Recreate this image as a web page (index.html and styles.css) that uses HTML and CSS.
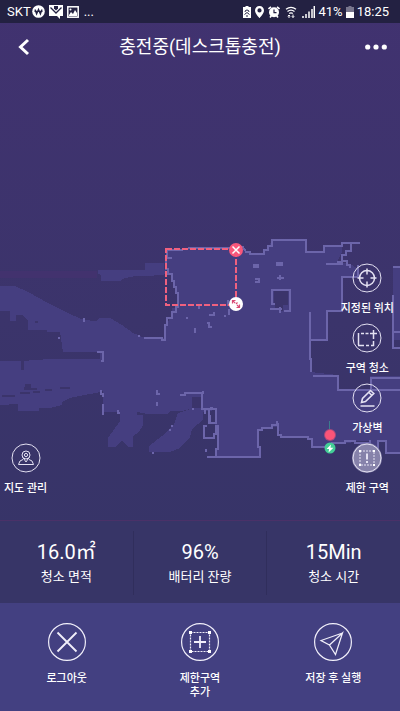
FILE: index.html
```html
<!DOCTYPE html>
<html lang="ko">
<head>
    <meta charset="UTF-8">
    <meta name="viewport" content="width=device-width, initial-scale=1.0">
    <title>로봇청소기 지도</title>
    <link rel="stylesheet" href="styles.css">
</head>
<body>
    <div class="app">
        <!-- Status bar -->
        <div class="status-bar">
            <div class="status-group status-left">
                <span>SKT</span>
                <svg width="13" height="13" viewBox="0 0 13 13"><circle cx="6.5" cy="6.5" r="6.3" fill="#fff"/><path d="M3 4.5l1.6 4.5 1.9-4.5 1.9 4.5L10 4.5M2.5 6.3h8" fill="none" stroke="#232142" stroke-width="1.3"/></svg>
                <svg class="icon-mail" width="14" height="14" viewBox="0 0 14 14"><path d="M0 0h14v11h-3v3l-3-3H0z" fill="#fff"/><path d="M1.5 2.500l5.500 5.500 5.500-5.500" fill="none" stroke="#232142" stroke-width="1.3"/><path d="M5 1h4v2.500l-2 2-2-2z" fill="#232142"/></svg>
                <svg width="12" height="12" viewBox="0 0 12 12"><rect x=".8" y=".8" width="10.400" height="10.400" fill="none" stroke="#fff" stroke-width="1.500"/><path d="M2 9l2-3 2 2 2-4 2 3v3H2z" fill="#fff"/><circle cx="3.500" cy="3.500" r="1" fill="#fff"/></svg>
                <span class="more">...</span>
            </div>
            <div class="status-group">
                <svg width="8" height="12" viewBox="0 0 8 12"><path d="M2.500 0h3v1H8v11H0V1h2.500z" fill="#fff"/><path d="M2 6a2 2 0 0 1 4 0M1.500 8.500L4 6.500l2.500 2M3 10h2" fill="none" stroke="#232142" stroke-width="1"/></svg>
                <svg class="icon-location" width="9" height="12" viewBox="0 0 9 12"><path fill-rule="evenodd" d="M4.500 0A4.400 4.400 0 0 0 0 4.400C0 7.500 4.500 12 4.500 12S9 7.500 9 4.400A4.400 4.400 0 0 0 4.500 0zm0 2.300a2 2 0 1 1 0 4.200 2 2 0 0 1 0-4.200z" fill="#fff"/></svg>
                <svg width="12" height="12" viewBox="0 0 12 12"><circle cx="6" cy="6.300" r="5" fill="#fff"/><path d="M.5 3L3 .8M11.500 3L9 .8M2 11.500l1.500-2M10 11.500L8.500 9.500" stroke="#fff" stroke-width="1.600"/><path d="M6 3.500v3.200h2.500" fill="none" stroke="#232142" stroke-width="1.200"/></svg>
                <svg class="icon-wifi" width="12" height="12" viewBox="0 0 12 12"><path d="M1 3.300q5-4 10 0M2.500 5.500q3.500-2.800 7 0M4.200 7.500q1.800-1.400 3.600 0" fill="none" stroke="#fff" stroke-width="1.300"/><path d="M4 12V9M2.800 10.300L4 9l1.200 1.300M8 8.500v3M6.800 10.200L8 11.500l1.200-1.300" fill="none" stroke="#fff"/></svg>
                <svg width="13" height="12" viewBox="0 0 13 12"><path d="M1 12v-2M4 12V8M7 12V5.500M10 12V3M12.300 12V0" stroke="#fff" stroke-width="1.500"/></svg>
                <span>41%</span>
                <svg width="8" height="12" viewBox="0 0 8 12"><path d="M2.500 0h3v1H8v6H0V1h2.500z" fill="#77758c"/><path d="M0 6h8v6H0z" fill="#fff"/></svg>
                <span>18:25</span>
            </div>
        </div>

        <header class="header">
            <button class="header-button" aria-label="뒤로">
                <svg width="12" height="18" viewBox="0 0 12 18"><path d="M10 2L2.500 9l7.500 7" fill="none" stroke="#fff" stroke-width="3"/></svg>
            </button>
            <h1>충전중(데스크톱충전)</h1>
            <button class="header-button" aria-label="더보기">
                <svg width="22" height="6" viewBox="0 0 22 6"><g fill="#fff"><circle cx="2.700" cy="3" r="2.600"/><circle cx="11" cy="3" r="2.600"/><circle cx="19.300" cy="3" r="2.600"/></g></svg>
            </button>
        </header>

        <!-- Map -->
        <main class="map">
            <svg class="map-canvas" viewBox="0 70 400 450" preserveAspectRatio="none" shape-rendering="crispEdges">
                <!-- scanned floor -->
                <g fill="#453e80">
                    <path d="M168 249L235 247H242L246 252L252 254H264L268 247L273 240H306V252H324V246H342V252L337 262L350 264L357 268V277H342V311H327V340H310V372L338 375V390H370V376H400V453H385V441H378V447H370V441H355L350 443H335L333 447H312V438L300 436H280L279 426L275 427L258 430V445L261 447V457H215L218 445V425H215V410L203 412V409L190 409L182 411H170L168 414H148L137 412V415H143V425L139 432L133 436V447H128L122 440L115 447H108V438L120 421V415L117 412H103V391L96 393L84 395L70 398L62 402V405L50 408H39V411H18V404L0 405V361H22L50 359H100V352H63L60 332H47V330H28V320L22 315H10V311H0V286H15L28 292L48 303L70 314L84 320L96 321L99 318H110L122 325L133 333L145 338H165L166 325L172 315V308H178V293L173 280L168 270L166 262Z"/>
                    <path d="M178 413L174 425L162 436L149 446V452H170L180 448L190 437L192 429L203 420V409H190Z"/>
                    <path d="M98 270H166V274L150 276H136L125 278L120 281H101V275L98 274ZM145 263H164V275H145Z"/>
                    <path d="M393 267H400V340H393ZM10 314H16V321H10Z"/>
                </g>
                <g fill="#3b346b">
                    <path d="M21 361H24V370H21ZM25 384H31V388H37V390H24ZM2 395H15V397H2ZM20 392H30V394H20ZM33 391H40V393H33ZM45 389H52V391H45ZM60 387H70V389H60ZM192 397H202V408H192ZM35 321H38V323H35Z"/>
                    <path d="M274 290H288V305H283V311H279V308H275V304H274Z"/>
                </g>
                <path d="M0 271H97V278H0Z" fill="#42326e"/>
                <!-- walls -->
                <g fill="none" stroke="#6c65aa" stroke-width="2">
                    <path d="M168 250H183M188 248H236M236 247H243L246 252H250V254H264V250H268V246H272V240H306V252H324V246H342V243H360M351 244V251H346V255H342V262H337M326 264H342V261H347V265H350V268M358 265V277H342V311H327V340H310V312"/>
                    <path d="M167 250V258H172M166 259V269H168V274H172V281H174V287H176V293H178V307H176V312H172V318H167V325H165V340H162V338H144"/>
                    <path d="M310 330V359H311V372M313 376H338V390H400M371 390V378H400M393 267H400M393 295V348H400M394 332H400"/>
                    <path d="M272 305V290H290V311H284M270 309H282M280 307V313M272 304H275"/>
                    <path d="M180 395H185V393H203V391M202 393V409H216V423H209V410M210 408H213M205 409V414M210 415V423M207 426H204V438H214V434H216V425M218 425V449H216V457M207 457H260V447H258V430H262V428H272V425H277V421M278 423V435H281V437H308V439H312V447H332V443H345V441H355V443H370V441H371M378 453V441H386V453H400M206 449V452"/>
                    <path d="M97 352H103V361H101M101 390V394H103V397M103 404V415M117 411H118V413H120M157 390V394H160M157 402V406M192 409H194M171 426H173M169 430H171M152 453H154M84 318V322M59 337V339M138 336H140"/>
                    <path d="M253 265H258V267H253M255 279H259V282H255M276 263H282V265H276M280 275V280M277 278H284M199 305V309M209 315H214V312M211 316V314M228 300V306M229 309V315M187 317V319M207 323H209V327H212M195 328V333M225 315V317"/>
                </g>
                <path d="M329 421V433" stroke="#3c7c8d" stroke-width="1"/>
                <!-- restricted zone -->
                <path d="M166 249H236V305H166Z" fill="none" stroke="#f0617f" stroke-width="2" stroke-dasharray="6 2"/>
            </svg>
            <span class="robot"></span>
            <span class="dock">
                <svg width="7" height="8" viewBox="0 0 7 8"><path d="M4.500 0L0 4.500h2.600L2 8l5-4.800H4z" fill="#fff"/></svg>
            </span>
            <button class="zone-handle zone-delete" aria-label="구역 삭제">
                <svg width="14" height="14" viewBox="0 0 14 14"><path d="M3.500 3.500l7 7M10.500 3.500l-7 7" stroke="#fff" stroke-width="1.500"/></svg>
            </button>
            <button class="zone-handle zone-resize" aria-label="구역 크기 조절">
                <svg width="14" height="14" viewBox="0 0 14 14"><path d="M3.500 3.500l2.700 2.700M8 8l2.500 2.500M3.500 6.500v-3h3M7.500 10.500h3v-3M8.500 5.500L7 7" fill="none" stroke="#d94b75" stroke-width="1.200"/></svg>
            </button>

            <button class="tool">
                <svg class="tool-icon" viewBox="0 0 30 30"><circle cx="15" cy="15" r="14"/><circle cx="15" cy="12" r="4"/><circle cx="15" cy="12" r="1.600"/><path d="M12 14.500L15 19l3-4.500M12 16.500L9 18l-1.500 3.500h15L21 18l-3-1.500"/></svg>
                지도 관리
            </button>
            <nav class="tools">
                <button class="tool">
                    <svg class="tool-icon" viewBox="0 0 30 30"><circle cx="15" cy="15" r="14"/><circle cx="15" cy="15" r="7.500" stroke-width="1.500"/><path d="M15 5.500v6M15 18.500v6M5.500 15h6M18.500 15h6" stroke-width="1.500"/></svg>
                    지정된 위치
                </button>
                <button class="tool">
                    <svg class="tool-icon" viewBox="0 0 30 30"><circle cx="15" cy="15" r="14"/><path d="M6.500 22V10M9 10.500h3M13.500 10.500h3M21.500 14v2M21.500 18v4.500H19M17 22.500h-3M12 22.500H6" stroke-width="1.500"/><path d="M18 10.500h7M21.500 7v7" stroke-width="1.500"/></svg>
                    구역 청소
                </button>
                <button class="tool">
                    <svg class="tool-icon" viewBox="0 0 30 30"><circle cx="15" cy="15" r="14"/><path d="M9.500 19.500l1-4 8-8 3.300 3-8.300 8zM17 9.500l3 3M8.500 23h14" stroke-width="1.600"/></svg>
                    가상벽
                </button>
                <button class="tool tool-active">
                    <svg class="tool-icon" viewBox="0 0 30 30"><circle cx="15" cy="15" r="14"/><path d="M8 8h14v14H8z" stroke-dasharray="2 1"/><path d="M15 10.500v6M15 18v2" stroke-width="2"/><path d="M7 7h2v2H7zM21 7h2v2h-2zM7 21h2v2H7zM21 21h2v2h-2z" fill="#fff" stroke="none"/></svg>
                    제한 구역
                </button>
            </nav>
        </main>

        <!-- Cleaning stats -->
        <section class="stats">
            <div class="stat"><strong>16.0㎡</strong><span>청소 면적</span></div>
            <div class="stat"><strong>96%</strong><span>배터리 잔량</span></div>
            <div class="stat"><strong>15Min</strong><span>청소 시간</span></div>
        </section>

        <footer class="actions">
            <button class="action">
                <svg class="action-icon" viewBox="0 0 38 38"><circle cx="19" cy="19" r="18.400"/><path d="M9.500 9.500l19 19M28.500 9.500l-19 19" stroke-width="1.800"/></svg>
                로그아웃
            </button>
            <button class="action">
                <svg class="action-icon" viewBox="0 0 38 38"><circle cx="19" cy="19" r="18.400"/><path d="M9.500 9.500h19v19h-19z" stroke-dasharray="2 1"/><path d="M19 13v12M13 19h12" stroke-width="1.800"/><path d="M8 8h3v3H8zM27 8h3v3h-3zM8 27h3v3H8zM27 27h3v3h-3z" fill="#fff" stroke="none"/></svg>
                제한구역<br>추가
            </button>
            <button class="action">
                <svg class="action-icon" viewBox="0 0 38 38"><circle cx="19" cy="19" r="18.400"/><path d="M28.500 10L7 17.500l8.500 4.500zM28.500 10L15.500 22l6 9.500z"/></svg>
                저장 후 실행
            </button>
        </footer>
    </div>
</body>
</html>
```
FILE: styles.css
```css
* {
    box-sizing: border-box;
}
body {
    margin: 0;
    color: #fff;
    font-family: Roboto, "Noto Sans CJK KR", sans-serif;
}
button {
    padding: 0;
    border: none;
    background: none;
    color: inherit;
    font-family: inherit;
    cursor: pointer;
}
svg {
    display: block;
}
.app {
    display: flex;
    flex-direction: column;
    min-height: 100vh;
    background: linear-gradient(#413270, #3b346b 45%, #373468 75%);
}

/* status bar */
.status-bar {
    display: flex;
    justify-content: space-between;
    align-items: center;
    height: 23px;
    padding: 0 11px 0 7px;
    background: #232142;
    font-size: 13px;
    line-height: 16px;
}
.status-group {
    display: flex;
    align-items: center;
    gap: 3px;
}
.status-left {
    gap: 1px;
}
.icon-mail {
    margin: 0 3px;
}
.more {
    margin-left: 4px;
}
.icon-wifi {
    margin: 0 2px;
}
.icon-location {
    margin: 0 1px;
}

/* header */
.header {
    display: flex;
    justify-content: space-between;
    align-items: center;
    height: 47px;
    padding: 0 13px;
}
.header h1 {
    margin: 0;
    font-size: 18px;
    font-weight: 400;
    line-height: 24px;
}
.header-button {
    display: flex;
    width: 22px;
    height: 32px;
    justify-content: center;
    align-items: center;
}

/* map */
.map {
    position: relative;
    display: flex;
    flex: 1;
    justify-content: space-between;
    align-items: flex-end;
    min-height: 400px;
    padding: 0 6px 23px 4px;
}
.map-canvas {
    position: absolute;
    top: 0;
    left: 0;
    width: 100%;
    height: 100%;
}
.robot,
.dock,
.zone-handle {
    position: absolute;
    display: flex;
    justify-content: center;
    align-items: center;
    border-radius: 50%;
    transform: translate(-50%, -50%);
}
.robot {
    left: 82.5%;
    top: 81%;
    width: 10px;
    height: 10px;
    background: #fb5478;
    box-shadow: 0 0 0 1px #a94a7c;
}
.dock {
    left: 82.5%;
    top: 84%;
    width: 11px;
    height: 11px;
    background: #43cf97;
}
.zone-handle {
    left: 59%;
    width: 14px;
    height: 14px;
}
.zone-delete {
    top: 40%;
    background: #f9577b;
}
.zone-resize {
    top: 52%;
    background: #fff;
}
.tools {
    display: flex;
    flex-direction: column;
    align-items: center;
    gap: 6px;
}
.tool {
    position: relative;
    display: flex;
    flex-direction: column;
    align-items: center;
    gap: 8px;
    font-size: 11px;
    font-weight: 500;
    line-height: 16px;
    white-space: nowrap;
}
.tool-icon {
    width: 30px;
    height: 30px;
    border-radius: 50%;
    fill: none;
    stroke: #e4e1f2;
}
.tool-active .tool-icon {
    background: #8682aa;
}

/* stats */
.stats {
    display: flex;
    align-items: center;
    height: 83px;
    padding-top: 2px;
    border-top: 1px solid #4a3168;
    background: #373567;
}
.stat {
    display: flex;
    flex: 1;
    flex-direction: column;
    justify-content: center;
    align-items: center;
    height: 64px;
    gap: 4px;
    font-size: 13px;
    line-height: 18px;
}
.stat + .stat {
    border-left: 1px solid #302e5c;
}
.stat strong {
    font-size: 20px;
    font-weight: 400;
    line-height: 24px;
}

/* bottom actions */
.actions {
    display: flex;
    height: 108px;
    padding-top: 20px;
    background: #434081;
}
.action {
    display: flex;
    flex: 1;
    flex-direction: column;
    align-items: center;
    gap: 11px;
    font-size: 11px;
    font-weight: 500;
    line-height: 14px;
}
.action-icon {
    width: 38px;
    height: 38px;
    fill: none;
    stroke: #f1effa;
    stroke-width: 1.2;
}
```
